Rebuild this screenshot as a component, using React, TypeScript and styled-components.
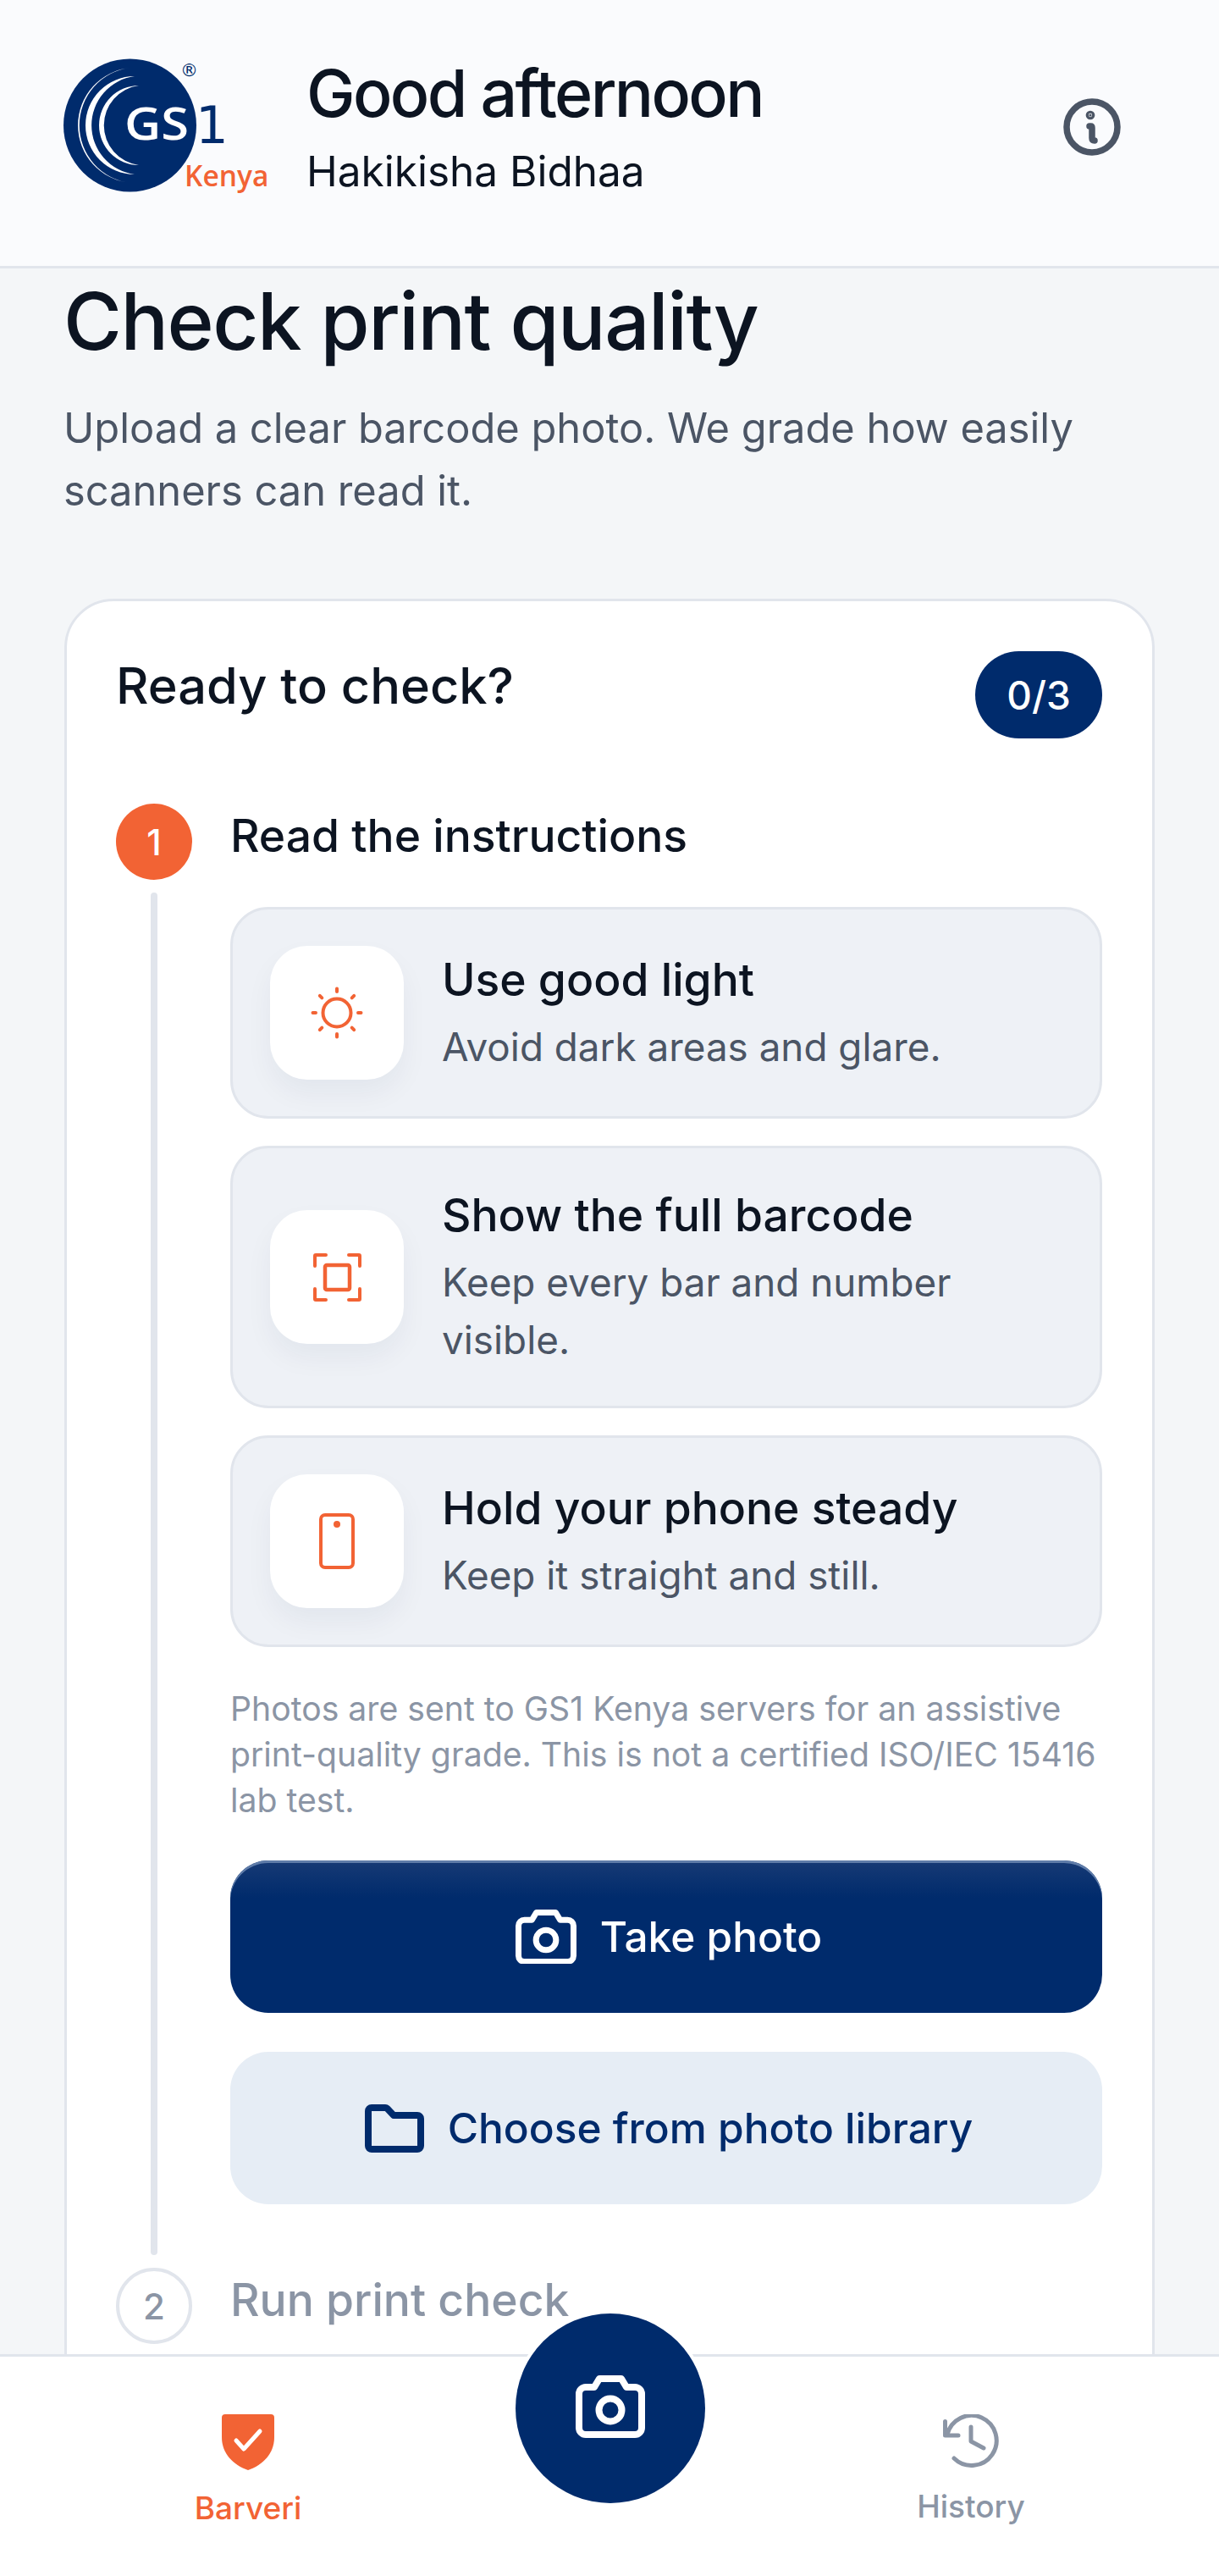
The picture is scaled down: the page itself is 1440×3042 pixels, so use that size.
import styled, { createGlobalStyle } from 'styled-components';
import type { ReactNode } from 'react';

const NAVY = '#002b6c';
const ORANGE = '#f26334';
const INK = '#0c1421';
const SLATE = '#4b5565';
const MUTED = '#8b95a5';
const LINE = '#e1e5ec';

const GlobalStyle = createGlobalStyle`
	html,
	body {
		margin: 0;
		padding: 0;
		background: #f4f6f8;
	}

	* {
		box-sizing: border-box;
	}
`;

function Gs1Logo() {
	const arcs = [
		'M79 12A68.5 68.5 0 0 0 79 148A68.3 68.3 0 0 1 79 12Z',
		'M84 22A58 58 0 0 0 84 138A58.5 58.5 0 0 1 84 22Z',
		'M89 33A47 47 0 0 0 89 127A47.4 47.4 0 0 1 89 33Z',
		'M94 44A37 37 0 0 0 94 117A37 37 0 0 1 94 44Z',
	];
	return (
		<svg width="243" height="165" viewBox="0 0 243 165">
			<circle cx="78.5" cy="80" r="78.5" fill={NAVY} />
			{arcs.map((d) => (
				<path key={d} d={d} fill="#fff" />
			))}
			<text x="72" y="97" fill="#fff" fontFamily="'Open Sans', sans-serif" fontWeight="600" fontSize="52" textLength="76" lengthAdjust="spacingAndGlyphs">
				GS
			</text>
			<text x="156" y="101" fill={NAVY} fontFamily="'DejaVu Sans', sans-serif" fontSize="61">
				1
			</text>
			<text x="138" y="22" fill={NAVY} fontFamily="'DejaVu Sans', sans-serif" fontSize="21">
				®
			</text>
			<text x="143" y="152" fill={ORANGE} fontFamily="'Open Sans', sans-serif" fontWeight="600" fontSize="33.5">
				Kenya
			</text>
		</svg>
	);
}

function CameraIcon({ width, color }: { width: number; color: string }) {
	return (
		<svg width={width} viewBox="0 0 82 74" fill="none" stroke={color} strokeWidth="8" strokeLinejoin="round">
			<path d="M28 4H54L60 14H70a8 8 0 0 1 8 8V62a8 8 0 0 1-8 8H12a8 8 0 0 1-8-8V22a8 8 0 0 1 8-8H22Z" />
			<circle cx="41" cy="41" r="13.5" />
		</svg>
	);
}

function InfoIcon() {
	return (
		<svg width="68" height="68" viewBox="0 0 68 68" fill="none" stroke={SLATE} strokeWidth="7.5" strokeLinecap="round" strokeLinejoin="round">
			<circle cx="34" cy="34" r="30" />
			<path d="M31 33H32.500Q34 33 34 35V47Q34 50 37 50" />
			<circle cx="32" cy="20" r="1.6" fill={SLATE} />
		</svg>
	);
}

function SunIcon() {
	return (
		<svg width="62" height="62" viewBox="0 0 62 62" fill="none" stroke={ORANGE} strokeWidth="4" strokeLinecap="round">
			<circle cx="31" cy="31" r="16.5" />
			<path d="M31 2.500V6M31 56V59.500M2.500 31H6M56 31H59.500M10.800 10.800L13.300 13.300M48.700 48.700L51.200 51.200M10.800 51.200L13.300 48.700M48.700 13.300L51.200 10.800" />
		</svg>
	);
}

function ScanIcon() {
	return (
		<svg width="57" height="57" viewBox="0 0 57 57" fill="none" stroke={ORANGE} strokeWidth="4" strokeLinecap="round" strokeLinejoin="round">
			<path d="M2 15V3a1 1 0 0 1 1-1H15M42 2H54a1 1 0 0 1 1 1V15M55 42V54a1 1 0 0 1-1 1H42M15 55H3a1 1 0 0 1-1-1V42" />
			<rect x="14" y="14" width="29" height="29" rx="2" strokeWidth="4.500" />
		</svg>
	);
}

function PhoneIcon() {
	return (
		<svg width="42" height="66" viewBox="0 0 42 66" fill="none" stroke={ORANGE} strokeWidth="4">
			<rect x="2" y="2" width="38" height="62" rx="5" />
			<circle cx="21" cy="13" r="4" fill={ORANGE} stroke="none" />
		</svg>
	);
}

function FolderIcon() {
	return (
		<svg width="70" height="57" viewBox="0 0 70 57" fill="none" stroke={NAVY} strokeWidth="8" strokeLinejoin="round">
			<path d="M4 8a4 4 0 0 1 4-4H24a4 4 0 0 1 2.500 1L34 13H62a4 4 0 0 1 4 4V49a4 4 0 0 1-4 4H8a4 4 0 0 1-4-4Z" />
		</svg>
	);
}

function ShieldIcon() {
	return (
		<svg width="62" height="66" viewBox="0 0 62 66">
			<path d="M4 0H58a4 4 0 0 1 4 4V27C62 47 48 60 31 66C14 60 0 47 0 27V4A4 4 0 0 1 4 0Z" fill={ORANGE} />
			<path d="M17 31L26 41L45 20" fill="none" stroke="#fff" strokeWidth="5" strokeLinecap="round" strokeLinejoin="round" />
		</svg>
	);
}

function HistoryIcon() {
	return (
		<svg width="66" height="64" viewBox="0 0 66 64" fill="none" stroke={MUTED} strokeWidth="5" strokeLinecap="round" strokeLinejoin="round">
			<path d="M2.500 8.500V25H18" />
			<path d="M5 24A29.500 29.500 0 1 1 13 52" />
			<path d="M33 15V32L48 40" />
		</svg>
	);
}

type Tip = { title: string; text: ReactNode; icon: ReactNode };

const tips: Tip[] = [
	{ title: 'Use good light', text: 'Avoid dark areas and glare.', icon: <SunIcon /> },
	{ title: 'Show the full barcode', text: 'Keep every bar and number visible.', icon: <ScanIcon /> },
	{ title: 'Hold your phone steady', text: 'Keep it straight and still.', icon: <PhoneIcon /> },
];

function App() {
	return (
		<Page>
			<GlobalStyle />
			<Header>
				<Brand>
					<Gs1Logo />
					<Greeting>
						<Hello>Good afternoon</Hello>
						<AppName>Hakikisha Bidhaa</AppName>
					</Greeting>
				</Brand>
				<InfoButton>
					<InfoIcon />
				</InfoButton>
			</Header>

			<Main>
				<Title>Check print quality</Title>
				<Lead>Upload a clear barcode photo. We grade how easily scanners can read it.</Lead>

				<Card>
					<CardHead>
						<CardTitle>Ready to check?</CardTitle>
						<Counter>0/3</Counter>
					</CardHead>

					<Step>
						<Rail>
							<StepDot $active>1</StepDot>
							<RailLine />
						</Rail>
						<StepBody>
							<StepTitle>Read the instructions</StepTitle>
							<TipList>
								{tips.map((tip) => (
									<TipCard key={tip.title}>
										<TipIcon>{tip.icon}</TipIcon>
										<div>
											<TipTitle>{tip.title}</TipTitle>
											<TipText>{tip.text}</TipText>
										</div>
									</TipCard>
								))}
							</TipList>
							<Note>
								Photos are sent to GS1 Kenya servers for an assistive print-quality grade. This is not a certified ISO/IEC 15416 lab test.
							</Note>
							<PrimaryButton>
								<CameraIcon width={72} color="#fff" />
								Take photo
							</PrimaryButton>
							<SecondaryButton>
								<FolderIcon />
								Choose from photo library
							</SecondaryButton>
						</StepBody>
					</Step>

					<Step>
						<Rail>
							<StepDot>2</StepDot>
						</Rail>
						<StepBody>
							<StepTitle $muted>Run print check</StepTitle>
						</StepBody>
					</Step>
				</Card>
			</Main>

			<BottomNav>
				<NavItem $active>
					<ShieldIcon />
					Barveri
				</NavItem>
				<span />
				<NavItem>
					<HistoryIcon />
					History
				</NavItem>
				<Fab>
					<CameraIcon width={82} color="#fff" />
				</Fab>
			</BottomNav>
		</Page>
	);
}

export default App;

const Page = styled.div`
	width: 1440px;
	height: 3042px;
	display: flex;
	flex-direction: column;
	overflow: hidden;
	background: #f4f6f8;
	font-family: Inter, 'Noto Sans', sans-serif;
	color: ${INK};
`;

const Header = styled.header`
	flex: none;
	height: 317px;
	padding: 0 76px 14px 75px;
	display: flex;
	align-items: center;
	justify-content: space-between;
	background: #fafbfd;
	border-bottom: 3px solid ${LINE};
`;

const Brand = styled.div`
	display: flex;
	align-items: center;
	gap: 44px;
`;

const Greeting = styled.div`
	display: flex;
	flex-direction: column;
	gap: 20px;
`;

const Hello = styled.div`
	font-size: 77px;
	line-height: 84px;
	font-weight: 450;
	letter-spacing: -2.65px;
`;

const AppName = styled.div`
	font-size: 49.5px;
	line-height: 60px;
`;

const InfoButton = styled.div`
	display: flex;
	margin-right: 40px;
`;

const Main = styled.main`
	flex: 1;
	min-height: 0;
	overflow: hidden;
	padding: 2px 76px 0;
`;

const Title = styled.h1`
	margin: 0 0 0 -1px;
	font-size: 94px;
	line-height: 120px;
	font-weight: 450;
	letter-spacing: -1.5px;
`;

const Lead = styled.p`
	margin: 30px 0 0 -1px;
	font-size: 48.8px;
	line-height: 74px;
	color: ${SLATE};
`;

const Card = styled.section`
	margin-top: 90px;
	padding: 59px 59px 59px 58px;
	background: #fff;
	border: 3px solid ${LINE};
	border-radius: 58px;
`;

const CardHead = styled.div`
	display: flex;
	align-items: flex-start;
	justify-content: space-between;
	margin-bottom: 77px;
`;

const CardTitle = styled.h2`
	margin: 0;
	font-size: 59.5px;
	line-height: 80px;
	font-weight: 450;
`;

const Counter = styled.div`
	width: 150px;
	height: 103px;
	display: flex;
	align-items: center;
	justify-content: center;
	border-radius: 52px;
	background: ${NAVY};
	color: #fff;
	font-size: 46px;
	font-weight: 500;
`;

const Step = styled.div`
	display: flex;
	gap: 45px;
`;

const Rail = styled.div`
	flex: none;
	width: 90px;
	display: flex;
	flex-direction: column;
	align-items: center;
	gap: 15px;
`;

const RailLine = styled.div`
	flex: 1;
	width: 8px;
	margin-bottom: 15px;
	border-radius: 4px;
	background: ${LINE};
`;

const StepDot = styled.div<{ $active?: boolean }>`
	flex: none;
	width: 90px;
	height: 90px;
	display: flex;
	align-items: center;
	justify-content: center;
	border-radius: 50%;
	font-size: 42px;
	font-weight: 500;
	background: ${(p) => (p.$active ? ORANGE : '#fff')};
	color: ${(p) => (p.$active ? '#fff' : MUTED)};
	border: ${(p) => (p.$active ? 'none' : `4px solid ${LINE}`)};
`;

const StepBody = styled.div`
	flex: 1;
	min-width: 0;
	padding-bottom: 75px;
`;

const StepTitle = styled.h3<{ $muted?: boolean }>`
	margin: 0;
	font-size: 53.4px;
	line-height: 76px;
	font-weight: 450;
	color: ${(p) => (p.$muted ? MUTED : INK)};
`;

const TipList = styled.div`
	margin-top: 46px;
	display: flex;
	flex-direction: column;
	gap: 32px;
`;

const TipCard = styled.div`
	display: flex;
	align-items: center;
	gap: 45px;
	padding: 43px 44px;
	background: #eef1f6;
	border: 3px solid ${LINE};
	border-radius: 45px;
`;

const TipIcon = styled.div`
	flex: none;
	width: 158px;
	height: 158px;
	display: flex;
	align-items: center;
	justify-content: center;
	background: #fff;
	border-radius: 44px;
	box-shadow: 0 16px 32px rgba(20, 40, 80, 0.05);
`;

const TipTitle = styled.div`
	font-size: 53.4px;
	line-height: 72px;
	font-weight: 450;
`;

const TipText = styled.div`
	margin-top: 10px;
	font-size: 45.8px;
	line-height: 68px;
	color: ${SLATE};
`;

const Note = styled.p`
	margin: 46px 0 0;
	font-size: 39.2px;
	line-height: 54px;
	color: ${MUTED};
`;

const PrimaryButton = styled.div`
	margin-top: 44px;
	height: 180px;
	padding-left: 6px;
	display: flex;
	align-items: center;
	justify-content: center;
	gap: 28px;
	border-radius: 45px;
	font-size: 49.6px;
	font-weight: 450;
	color: #fff;
	background: linear-gradient(180deg, #173a75 0, ${NAVY} 44px);
	box-shadow: inset 0 3px 0 #5f7ca9;
`;

const SecondaryButton = styled.div`
	margin-top: 46px;
	height: 180px;
	padding-left: 6px;
	display: flex;
	align-items: center;
	justify-content: center;
	gap: 28px;
	border-radius: 45px;
	font-size: 49.6px;
	font-weight: 450;
	color: ${NAVY};
	background: #e6edf5;
`;

const BottomNav = styled.nav`
	flex: none;
	position: relative;
	height: 262px;
	display: grid;
	grid-template-columns: 1fr 268px 1fr;
	background: #fff;
	border-top: 3px solid ${LINE};
`;

const NavItem = styled.div<{ $active?: boolean }>`
	display: flex;
	flex-direction: column;
	align-items: center;
	gap: 22px;
	padding-top: 68px;
	font-size: 37px;
	line-height: 46px;
	font-weight: 500;
	color: ${(p) => (p.$active ? ORANGE : MUTED)};
`;

const Fab = styled.div`
	position: absolute;
	left: 50%;
	top: -51px;
	width: 224px;
	height: 224px;
	margin-left: -111px;
	padding-bottom: 4px;
	display: flex;
	align-items: center;
	justify-content: center;
	border-radius: 50%;
	background: ${NAVY};
	box-shadow: 0 0 0 4px #fff;
`;
